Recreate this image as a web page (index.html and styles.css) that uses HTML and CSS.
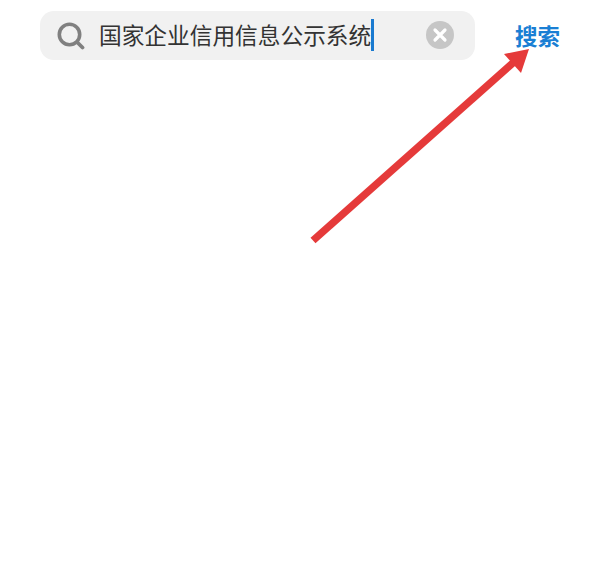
FILE: index.html
```html
<!DOCTYPE html>
<html lang="zh-CN">
<head>
    <meta charset="UTF-8">
    <title>搜索</title>
    <link rel="stylesheet" href="styles.css">
</head>
<body>
    <div class="top">
        <div class="search">
            <svg class="search__icon" width="30" height="30" viewBox="0 0 30 30">
                <circle cx="12.5" cy="14.5" r="10.2" fill="none" stroke="#808080" stroke-width="3.6"/>
                <path d="M20.5 22.5 L25.5 27.5" stroke="#808080" stroke-width="3.8" stroke-linecap="round"/>
            </svg>
            <div class="search__text">国家企业信用信息公示系统</div>
            <div class="search__cursor"></div>
            <svg class="search__clear" width="28" height="28" viewBox="0 0 28 28">
                <circle cx="14" cy="14" r="14" fill="#c6c6c6"/>
                <path d="M9 9 L19 19 M19 9 L9 19" stroke="#fff" stroke-width="3.2" stroke-linecap="round"/>
            </svg>
        </div>
        <div class="action">搜索</div>
    </div>
    <!-- red arrow drawn over the screenshot -->
    <svg class="arrow" width="600" height="580" viewBox="0 0 600 580">
        <path d="M313 240.5 L514 62" stroke="#e53a3a" stroke-width="7.5"/>
        <polygon points="529,49 504,54 521,73" fill="#e53a3a"/>
    </svg>
</body>
</html>
```
FILE: styles.css
```css
*{
    box-sizing: border-box;
}
body{
    margin: 0;
    width: 600px;
    height: 580px;
    position: relative;
    overflow: hidden;
    background-color: #fff;
    font-family: "Noto Sans CJK SC", "Noto Sans", sans-serif;
}
.top{
    display: flex;
    align-items: center;
    padding: 11px 40px 0 40px;
}
.search{
    display: flex;
    align-items: center;
    flex: none;
    width: 435px;
    height: 48.5px;
    padding: 0 21.5px 0 17px;
    border-radius: 14px;
    background-color: #f1f1f1;
}
.search__icon{
    flex: none;
    margin-right: 12px;
}
.search__text{
    font-size: 22.7px;
    line-height: 32px;
    color: #333;
    white-space: nowrap;
}
.search__cursor{
    flex: none;
    width: 3px;
    height: 32px;
    background-color: #1a7ad0;
}
.search__clear{
    flex: none;
    margin-left: auto;
}
.action{
    margin-left: 40px;
    font-size: 22.5px;
    font-weight: 700;
    color: #1a7fd4;
    white-space: nowrap;
}
.arrow{
    position: absolute;
    left: 0;
    top: 0;
}
```
